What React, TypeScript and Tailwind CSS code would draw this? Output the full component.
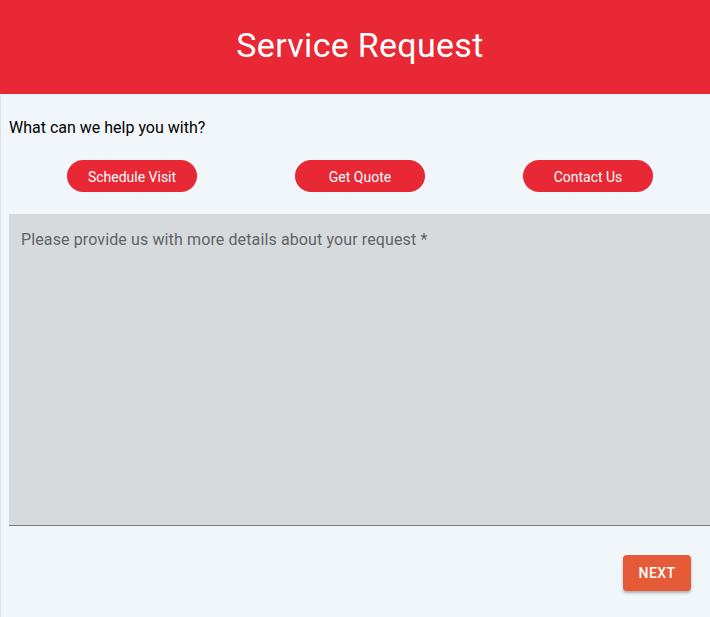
import React from "react";

export default function App() {
  const opts = ["Schedule Visit", "Get Quote", "Contact Us"];
  return (
    <div className="w-[710px] h-[617px] overflow-hidden bg-[#f1f6fa] flex flex-col" style={{ fontFamily: "Roboto, 'Noto Sans', sans-serif" }}>
      <header className="h-[94px] shrink-0 bg-[#e82834] flex items-center justify-center pb-[5px] pl-[10px]">
        <h1 className="text-white text-[34px] leading-none font-normal tracking-[0.3px]">Service Request</h1>
      </header>
      <main className="flex-1 border-l border-[#dde2e6] pl-[8px] pt-[22px] flex flex-col">
        <p className="text-[16px] leading-6 text-black">What can we help you with?</p>
        <div className="grid grid-cols-3 w-[684px] ml-[9px] mt-[20px]">
          {opts.map((o) => (
            <div key={o} className="flex justify-center">
              <button className="w-[130px] h-[32px] pt-[2px] rounded-full bg-[#e82834] text-white text-[14px]">{o}</button>
            </div>
          ))}
        </div>
        <div className="mt-[22px] w-[720px] h-[312px] bg-[#d6dadd] border-b border-[#777b7e] px-[12px] pt-[14px]">
          <span className="text-[16px] leading-6 text-[#5f6368] tracking-[0.12px]">Please provide us with more details about your request *</span>
        </div>
        <div className="flex justify-end pr-[19px] mt-[29px]">
          <button className="w-[68px] h-[36px] rounded bg-[#e55a37] text-white text-[14px] font-medium tracking-[0.4px] shadow-[0_2px_3px_rgba(0,0,0,0.3)]">NEXT</button>
        </div>
      </main>
    </div>
  );
}
